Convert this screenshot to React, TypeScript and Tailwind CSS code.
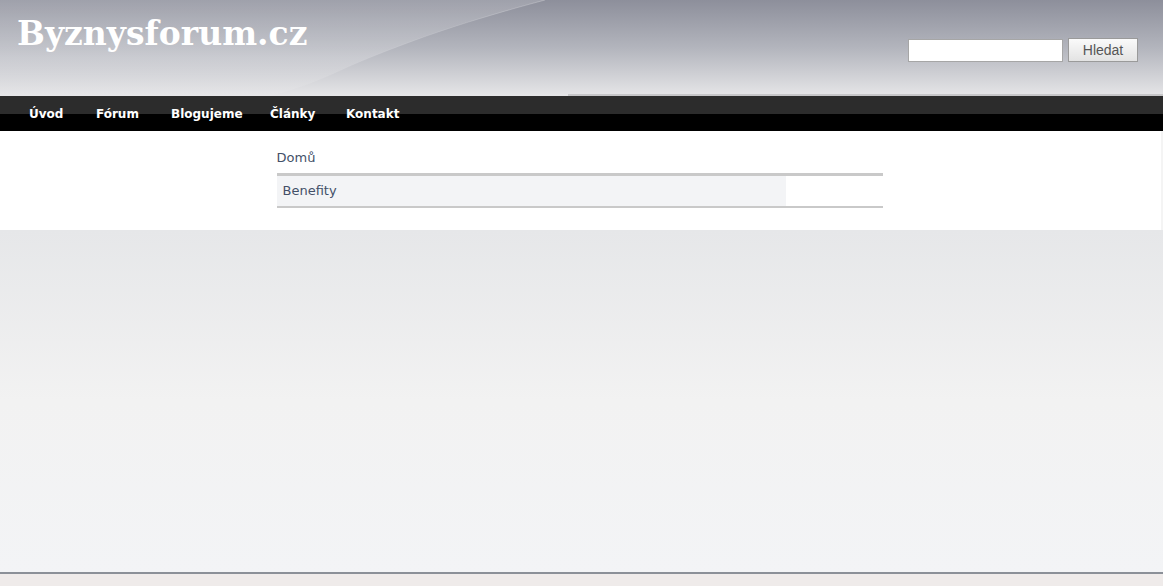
export default function App() {
  const nav = [
    { label: 'Úvod', w: 'w-[67px]' },
    { label: 'Fórum', w: 'w-[75px]' },
    { label: 'Blogujeme', w: 'w-[99px]' },
    { label: 'Články', w: 'w-[76px]' },
    { label: 'Kontakt', w: 'w-[80px]' },
  ];

  return (
    <div className="min-h-[586px] w-full flex flex-col bg-[#efebea]" style={{ fontFamily: '"DejaVu Sans", sans-serif' }}>
      {/* header */}
      <header className="relative h-[96px] overflow-hidden bg-gradient-to-b from-[#8d8f9b] via-[#b3b5bd] to-[#e6e6e8]">
        <svg className="absolute inset-0 h-full w-full" viewBox="0 0 1163 96" preserveAspectRatio="none">
          <defs>
            <linearGradient id="sw" x1="0" y1="0" x2="0" y2="1">
              <stop offset="0" stopColor="#ffffff" stopOpacity="0.16" />
              <stop offset="0.6" stopColor="#ffffff" stopOpacity="0.2" />
              <stop offset="1" stopColor="#ffffff" stopOpacity="0.05" />
            </linearGradient>
            <linearGradient id="edge" x1="0" y1="0" x2="1" y2="0">
              <stop offset="0" stopColor="#ffffff" stopOpacity="0" />
              <stop offset="0.7" stopColor="#ffffff" stopOpacity="0.12" />
              <stop offset="1" stopColor="#ffffff" stopOpacity="0.25" />
            </linearGradient>
          </defs>
          <path d="M0 0 L545 0 C 470 20, 410 40, 350 66 C 320 80, 295 90, 270 96 L0 96 Z" fill="url(#sw)" />
          <path d="M270 96 C 295 90, 320 80, 350 66 C 410 40, 470 20, 545 0" fill="none" stroke="url(#edge)" strokeWidth="1" />
          <rect x="568" y="94" width="595" height="2" fill="#c6c6c8" />
        </svg>
        <div className="relative flex items-start justify-between">
          <h1 className="pl-[17px] pt-[12px] text-[33px] font-bold leading-[44px] text-white" style={{ fontFamily: '"DejaVu Serif", serif' }}>
            Byznysforum.cz
          </h1>
          <form className="flex items-center gap-[5px] pt-[38px] pr-[25px]" onSubmit={(e) => e.preventDefault()}>
            <input className="h-[23px] w-[155px] border border-[#a6a6a6] bg-white" />
            <button
              type="button"
              className="h-[24px] w-[70px] border border-[#9a9a9a] bg-gradient-to-b from-[#fafafa] to-[#e3e3e3] text-[14px] text-[#555]"
              style={{ fontFamily: '"Liberation Sans", Arial, sans-serif' }}
            >
              Hledat
            </button>
          </form>
        </div>
      </header>

      {/* nav */}
      <nav className="h-[35px] bg-[linear-gradient(to_bottom,#2c2c2c_0,#2c2c2c_18px,#000_18px,#000_100%)]">
        <ul className="flex h-full items-center pl-[29px] text-[12px] font-bold text-white">
          {nav.map((item) => (
            <li key={item.label} className={item.w}>
              {item.label}
            </li>
          ))}
        </ul>
      </nav>

      {/* content */}
      <main className="h-[99px] bg-white border-r-2 border-[#f4f4f4]">
        <div className="mx-auto w-[606px] pt-[18px] translate-x-[-1px]">
          <div className="text-[13px] text-[#435068] leading-[17px]">Domů</div>
          <div className="mt-[7px] h-[3px] bg-[#c9c9c9]" />
          <div className="flex border-b-2 border-[#c9c9c9]">
            <div className="w-[509px] bg-[#f3f4f6] px-[6px] h-[30px] flex items-center text-[13px] text-[#435068]">Benefity</div>
          </div>
        </div>
      </main>

      <div className="h-[342px] bg-gradient-to-b from-[#e6e7e9] via-[#f2f2f2] to-[#f3f4f6]" />
      <div className="h-[2px] bg-[#8b9098]" />
      <div className="flex-1 bg-[#efebea]" />
    </div>
  );
}
